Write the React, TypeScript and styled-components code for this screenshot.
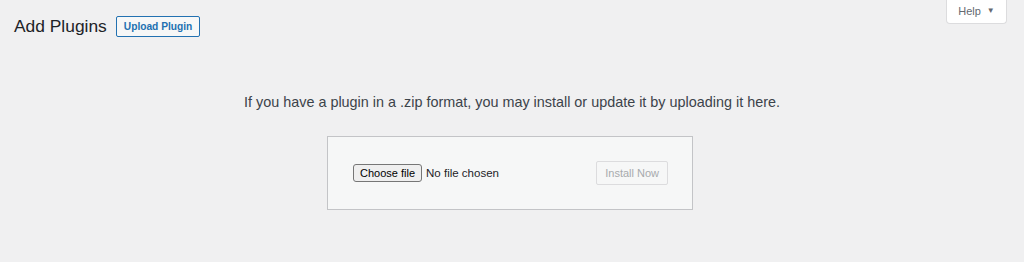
import styled, { createGlobalStyle } from 'styled-components'

const Global = createGlobalStyle`
  html, body { margin: 0; padding: 0; }
  body {
    background: #f0f0f1;
    font-family: "Liberation Sans", Arial, sans-serif;
    color: #1d2327;
  }
`

const Page = styled.div`
  position: relative;
  width: 1024px;
  height: 262px;
  overflow: hidden;
`

const HelpTab = styled.button`
  position: absolute;
  top: -1px;
  right: 17px;
  width: 61px;
  height: 25px;
  display: flex;
  align-items: center;
  justify-content: center;
  gap: 6px;
  background: #fff;
  border: 1px solid #dcdcde;
  border-top: none;
  border-radius: 0 0 4px 4px;
  color: #646970;
  font-family: inherit;
  font-size: 11px;
  padding: 0 0 1px;
  span { font-size: 8px; }
`

const Header = styled.div`
  display: flex;
  align-items: center;
  gap: 9px;
  padding: 16px 0 0 14px;
`

const Title = styled.h1`
  margin: 0;
  font-size: 17.4px;
  font-weight: 400;
  line-height: 21px;
`

const OutlineButton = styled.button`
  height: 21px;
  padding: 0 7px;
  background: #f6f7f7;
  border: 1px solid #2271b1;
  border-radius: 2px;
  color: #2271b1;
  font-family: inherit;
  font-size: 10.2px;
  font-weight: 700;
`

const Intro = styled.p`
  margin: 55px 0 0;
  text-align: center;
  font-size: 14.4px;
  line-height: 20px;
  color: #3c434a;
`

const UploadBox = styled.form`
  width: 366px;
  height: 74px;
  margin: 24px auto 0 327px;
  padding: 0 24px 0 25px;
  box-sizing: border-box;
  display: flex;
  align-items: center;
  justify-content: space-between;
  background: #f6f7f7;
  border: 1px solid #c3c4c7;
`

const FileRow = styled.div`
  display: flex;
  align-items: center;
  gap: 4px;
  font-size: 11.5px;
  color: #1d2327;
`

const ChooseButton = styled.span`
  display: inline-flex;
  align-items: center;
  height: 18px;
  padding: 0 6px;
  background: #efefef;
  border: 1px solid #767676;
  border-radius: 3px;
  font-size: 11px;
  color: #000;
  box-sizing: border-box;
`

const DisabledButton = styled.button`
  height: 24px;
  padding: 0 8px;
  background: #f6f7f7;
  border: 1px solid #dcdcde;
  border-radius: 2px;
  color: #a7aaad;
  font-family: inherit;
  font-size: 11px;
`

export default function App() {
  return (
    <Page>
      <Global />
      <HelpTab>Help <span>▼</span></HelpTab>
      <Header>
        <Title>Add Plugins</Title>
        <OutlineButton>Upload Plugin</OutlineButton>
      </Header>
      <Intro>If you have a plugin in a .zip format, you may install or update it by uploading it here.</Intro>
      <UploadBox>
        <FileRow>
          <ChooseButton>Choose file</ChooseButton>
          No file chosen
        </FileRow>
        <DisabledButton disabled>Install Now</DisabledButton>
      </UploadBox>
    </Page>
  )
}
